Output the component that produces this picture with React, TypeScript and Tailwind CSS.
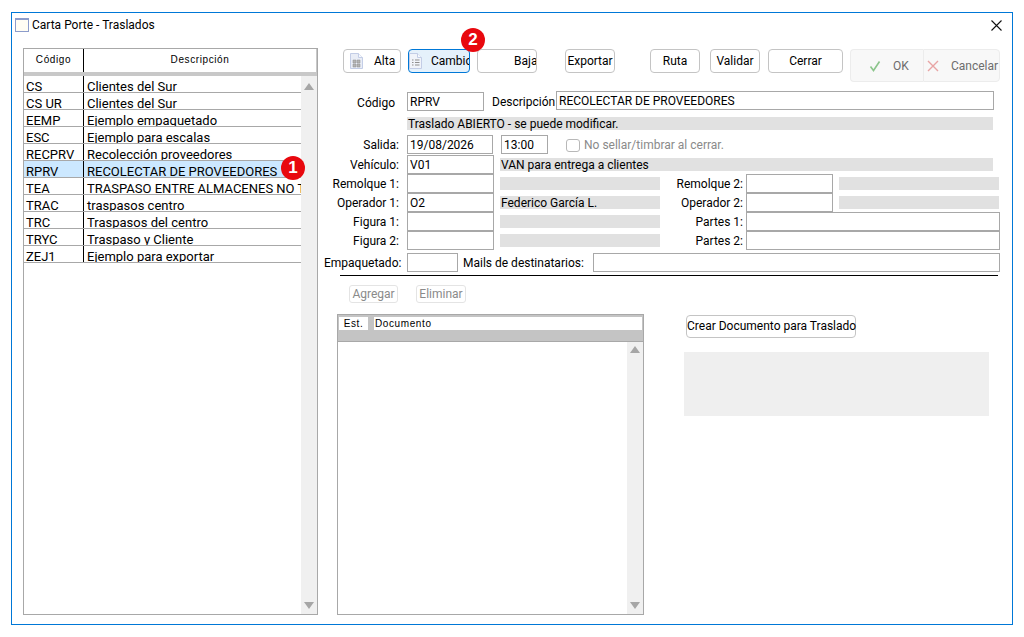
import React from 'react';

const rows = [
  ['CS', 'Clientes del Sur'],
  ['CS UR', 'Clientes del Sur'],
  ['EEMP', 'Ejemplo empaquetado'],
  ['ESC', 'Ejemplo para escalas'],
  ['RECPRV', 'Recolección proveedores'],
  ['RPRV', 'RECOLECTAR DE PROVEEDORES'],
  ['TEA', 'TRASPASO ENTRE ALMACENES NO TRASPASO'],
  ['TRAC', 'traspasos centro'],
  ['TRC', 'Traspasos del centro'],
  ['TRYC', 'Traspaso y Cliente'],
  ['ZEJ1', 'Ejemplo para exportar'],
];

const gridHead = "font-['Liberation_Sans',sans-serif] text-[10px] tracking-[0.6px]";

const Field: React.FC<{ w: string; value?: string; className?: string }> = ({ w, value, className }) => (
  <div className={`${w} h-[19px] shrink-0 border border-[#a8a8a8] bg-white pl-[2px] text-[12px] leading-[18px] whitespace-nowrap overflow-hidden ${className ?? ''}`}>
    {value}
  </div>
);

const Readonly: React.FC<{ w: string; value?: string }> = ({ w, value }) => (
  <div className={`${w} h-[13px] shrink-0 bg-[#e1e1e1] text-[12px] leading-[15px] pl-[1px] whitespace-nowrap`}>{value}</div>
);

const Label: React.FC<{ w: string; children: React.ReactNode }> = ({ w, children }) => (
  <div className={`${w} shrink-0 text-right text-[12px] leading-[21px] whitespace-nowrap`}>{children}</div>
);

const Btn: React.FC<{ w: string; ml: string; children: React.ReactNode; active?: boolean; className?: string }> = ({ w, ml, children, active, className }) => (
  <div
    className={`${w} ${ml} h-[24px] shrink-0 rounded-[4px] border flex items-center pb-[1px] text-[12px] whitespace-nowrap overflow-hidden ${
      active ? 'border-[#0078d7] bg-[#e5f1fb]' : 'border-[#c4c4c4] bg-white'
    } ${className ?? 'justify-center'}`}
  >
    {children}
  </div>
);

const GridDoc = () => (
  <svg width="13" height="16" viewBox="0 0 13 16" className="shrink-0 mt-[1px]">
    <path d="M.5.5h8l4 4v11H.5z" fill="#e9edf6" stroke="#c3cde6" />
    <path d="M8.5.5v4h4" fill="#f7f9fd" stroke="#c3cde6" />
    <path d="M3 7h3v3H3zM7 7h3v3H7zM3 11h3v3H3zM7 11h3v3H7z" fill="#b4b4b4" stroke="#8f8f8f" strokeWidth="0.5" />
  </svg>
);

const ListDoc = () => (
  <svg width="13" height="16" viewBox="0 0 13 16" className="shrink-0 mt-[1px]">
    <path d="M.5.5h8l4 4v11H.5z" fill="#f1f4fa" stroke="#c3cde6" />
    <path d="M8.5.5v4h4" fill="#f7f9fd" stroke="#c3cde6" />
    <path d="M3 7h1.5M6 7h4.5M3 9.5h1.5M6 9.5h4.5M3 12h1.5M6 12h4.5" stroke="#8f8f8f" strokeWidth="1" />
  </svg>
);

const Badge: React.FC<{ n: string; className: string }> = ({ n, className }) => (
  <div className={`absolute w-[24px] h-[24px] rounded-full bg-[#e8080e] text-white font-bold font-['Liberation_Sans',sans-serif] text-[17px] leading-[24px] text-center ${className}`}>{n}</div>
);

const Scrollbar: React.FC<{ pt: string }> = ({ pt }) => (
  <div className={`w-[16px] shrink-0 bg-[#f0f0f0] flex flex-col items-center justify-between pb-[5px] ${pt}`}>
    <svg width="10" height="7" viewBox="0 0 10 7"><path d="M5 0l5 7H0z" fill="#a6a6a6" /></svg>
    <svg width="10" height="7" viewBox="0 0 10 7"><path d="M0 0h10L5 7z" fill="#a6a6a6" /></svg>
  </div>
);

const App: React.FC = () => {
  return (
    <div className="w-[1024px] h-[637px] bg-white pt-[12px] pl-[11px] text-black font-['Roboto','Noto_Sans',sans-serif] overflow-hidden">
      <div className="relative w-[1002px] h-[613px] border border-[#0078d7] bg-white">
        {/* title bar */}
        <div className="flex items-center h-[24px] pl-[3px]">
          <div className="w-[14px] h-[14px] border border-[#8c9ccb] border-t-2 bg-[#fffdf4]" />
          <span className="ml-[3px] text-[12px]">Carta Porte - Traslados</span>
          <svg width="11" height="11" viewBox="0 0 11 11" className="ml-auto mr-[10px]">
            <path d="M.5.5l10 10M10.5.5l-10 10" stroke="#111" strokeWidth="1.1" fill="none" />
          </svg>
        </div>

        <div className="flex pl-[11px] pt-[11px]">
          {/* list */}
          <div className="w-[295px] h-[567px] shrink-0 border border-[#a8a8a8] flex flex-col">
            <div className="h-[27px] shrink-0 bg-[#c8c8c8] pb-[4px] flex">
              <div className={`w-[60px] bg-white text-center leading-[21px] border-r border-black ${gridHead}`}>Código</div>
              <div className={`flex-1 mr-[1px] bg-white text-center leading-[21px] ${gridHead}`}>Descripción</div>
            </div>
            <div className="flex-1 flex min-h-0">
              <div className="flex-1 min-w-0 overflow-hidden">
                {rows.map(([code, desc]) => (
                  <div key={code} className={`flex h-[17px] overflow-hidden border-b border-[#a8a8a8] text-[13px] leading-[22px] ${code === 'RPRV' ? 'bg-[#cce8ff]' : ''}`}>
                    <div className="w-[60px] shrink-0 pl-[2px] border-r border-black">{code}</div>
                    <div className="pl-[3px] whitespace-nowrap">{desc}</div>
                  </div>
                ))}
              </div>
              <Scrollbar pt="pt-[7px]" />
            </div>
          </div>

          {/* form */}
          <div className="ml-[6px] w-[676px] shrink-0">
            {/* toolbar */}
            <div className="flex items-start h-[43px] pt-[1px]">
              <Btn w="w-[58px]" ml="ml-[19px]" className="justify-start pl-[6px]"><GridDoc /><span className="ml-[11px]">Alta</span></Btn>
              <Btn w="w-[62px]" ml="ml-[7px]" active className="justify-start"><ListDoc /><span className="ml-[9px]">Cambio</span></Btn>
              <Btn w="w-[60px]" ml="ml-[7px]" className="justify-start pl-[36px]">Baja</Btn>
              <Btn w="w-[50px]" ml="ml-[28px]">Exportar</Btn>
              <Btn w="w-[50px]" ml="ml-[35px]">Ruta</Btn>
              <Btn w="w-[50px]" ml="ml-[10px]">Validar</Btn>
              <Btn w="w-[75px]" ml="ml-[8px]">Cerrar</Btn>
              <div className="ml-[7px] w-[73px] h-[33px] shrink-0 rounded-l-[4px] border border-r-0 border-[#ececec] bg-[#f8f8f8] flex items-center pl-[18px] text-[12px] text-[#6d6d6d]">
                <svg width="12" height="12" viewBox="0 0 12 12"><path d="M1.5 6.5l3 4 6-9" stroke="#8cc58c" strokeWidth="1.6" fill="none" /></svg>
                <span className="ml-[12px]">OK</span>
              </div>
              <div className="w-[77px] h-[33px] shrink-0 rounded-r-[4px] border border-[#ececec] bg-[#f8f8f8] flex items-center pl-[3px] text-[12px] text-[#6d6d6d]">
                <svg width="12" height="12" viewBox="0 0 12 12"><path d="M1 1l10 10M11 1L1 11" stroke="#e8a4a4" strokeWidth="1.4" fill="none" /></svg>
                <span className="ml-[12px]">Cancelar</span>
              </div>
            </div>

            {/* codigo */}
            <div className="flex h-[26px] items-start">
              <div className="w-[71px] mt-[2px]"><Label w="w-[71px]">Código</Label></div>
              <Field w="w-[77px]" value="RPRV" className="ml-[12px] mt-[1px]" />
              <div className="ml-[8px] w-[62px] text-[12px] leading-[22px] whitespace-nowrap">Descripción</div>
              <Field w="w-[438px]" value="RECOLECTAR DE PROVEEDORES" className="ml-[2px]" />
            </div>
            <div className="flex h-[18px]">
              <div className="ml-[83px] w-[586px] h-[13px] bg-[#e1e1e1] text-[12px] leading-[15px] pl-[1px]">Traslado ABIERTO - se puede modificar.</div>
            </div>

            {/* salida */}
            <div className="flex h-[20px] items-start">
              <Label w="w-[75px]">Salida:</Label>
              <Field w="w-[86px]" value="19/08/2026" className="ml-[8px]" />
              <Field w="w-[47px]" value="13:00" className="ml-[8px]" />
              <div className="ml-[18px] mt-[4px] w-[14px] h-[13px] rounded-[3px] border border-[#b8b8b8] bg-white" />
              <span className="ml-[4px] text-[12px] leading-[21px] text-[#8a8a8a]">No sellar/timbrar al cerrar.</span>
            </div>

            <div className="flex h-[19px] items-start">
              <Label w="w-[75px]">Vehículo:</Label>
              <Field w="w-[87px]" value="V01" className="ml-[8px]" />
              <div className="ml-[6px] mt-[3px]"><Readonly w="w-[493px]" value="VAN para entrega a clientes" /></div>
            </div>

            {[
              ['Remolque 1:', '', '', 'Remolque 2:'],
              ['Operador 1:', 'O2', 'Federico García L.', 'Operador 2:'],
            ].map(([l1, v, name, l2]) => (
              <div key={l1} className="flex h-[19px] items-start">
                <Label w="w-[75px]">{l1}</Label>
                <Field w="w-[87px]" value={v} className="ml-[8px]" />
                <div className="ml-[6px] mt-[3px]"><Readonly w="w-[160px]" value={name} /></div>
                <Label w="w-[83px]">{l2}</Label>
                <Field w="w-[87px]" className="ml-[3px]" />
                <div className="ml-[6px] mt-[3px]"><Readonly w="w-[160px]" /></div>
              </div>
            ))}

            {[
              ['Figura 1:', 'Partes 1:'],
              ['Figura 2:', 'Partes 2:'],
            ].map(([l1, l2]) => (
              <div key={l1} className="flex h-[19px] items-start">
                <Label w="w-[75px]">{l1}</Label>
                <Field w="w-[87px]" className="ml-[8px]" />
                <div className="ml-[6px] mt-[3px]"><Readonly w="w-[160px]" /></div>
                <Label w="w-[83px]">{l2}</Label>
                <Field w="w-[254px]" className="ml-[3px]" />
              </div>
            ))}

            {/* empaquetado */}
            <div className="flex h-[22px] items-start mt-[3px]">
              <Label w="w-[77px]">Empaquetado:</Label>
              <Field w="w-[51px]" className="ml-[6px]" />
              <div className="ml-[5px] w-[117px] text-[12px] leading-[21px] whitespace-nowrap">Mails de destinatarios:</div>
              <Field w="w-[407px]" className="ml-[13px]" />
            </div>
            <div className="ml-[16px] w-[658px] h-[1px] bg-black" />

            {/* agregar */}
            <div className="flex h-[38px] pt-[9px]">
              <div className="ml-[25px] w-[49px] h-[18px] rounded-[3px] border border-[#e4e4e4] text-[12px] leading-[16px] text-center text-[#8a8a8a]">Agregar</div>
              <div className="ml-[18px] w-[50px] h-[18px] rounded-[3px] border border-[#e4e4e4] text-[12px] leading-[16px] text-center text-[#8a8a8a]">Eliminar</div>
            </div>

            <div className="flex items-start">
              <div className="ml-[13px] w-[307px] h-[301px] shrink-0 border border-[#a8a8a8] flex flex-col">
                <div className="h-[27px] shrink-0 bg-[#c4c4c4] border-b border-[#a8a8a8] pt-[2px] px-[1px] flex">
                  <div className={`w-[29px] h-[13px] bg-white text-center leading-[13px] ${gridHead}`}>Est.</div>
                  <div className={`ml-[6px] flex-1 h-[13px] bg-white pl-[1px] leading-[13px] ${gridHead}`}>Documento</div>
                </div>
                <div className="flex-1 flex justify-end min-h-0"><Scrollbar pt="pt-[4px]" /></div>
              </div>
              <div className="ml-[40px] mt-[1px]">
                <div className="ml-[2px] w-[170px] h-[23px] rounded-[4px] border border-[#c4c4c4] text-[12px] leading-[21px] text-center whitespace-nowrap">Crear Documento para Traslado</div>
                <div className="mt-[14px] w-[305px] h-[64px] bg-[#efefef]" />
              </div>
            </div>
          </div>
        </div>

        <Badge n="1" className="left-[269px] top-[143px]" />
        <Badge n="2" className="left-[449px] top-[15px]" />
      </div>
    </div>
  );
};

export default App;
